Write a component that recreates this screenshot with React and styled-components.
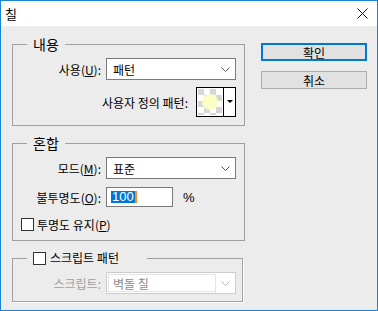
import React from "react";
import styled, { createGlobalStyle } from "styled-components";

const GlobalStyle = createGlobalStyle`
  html, body {
    margin: 0;
    padding: 0;
    background: #ffffff;
  }
  body {
    font-family: "Noto Sans CJK KR", "Noto Sans", sans-serif;
    font-size: 12px;
    color: #000;
  }
`;

const Window = styled.div`
  width: 378px;
  height: 311px;
  box-sizing: border-box;
  border: 1px solid #1883d7;
  background: #ececec;
  display: flex;
  flex-direction: column;
`;

const TitleBar = styled.div`
  height: 25px;
  flex-shrink: 0;
  background: #ffffff;
  display: flex;
  align-items: center;
  justify-content: space-between;
  padding: 0 9px 0 4px;
  font-size: 13px;
`;

const Body = styled.div`
  display: flex;
  align-items: flex-start;
  padding: 8px 0 0 11px;
`;

const LeftColumn = styled.div`
  display: flex;
  flex-direction: column;
  gap: 7px;
`;

const RightColumn = styled.div`
  display: flex;
  flex-direction: column;
  gap: 10px;
  margin-left: 16px;
  padding-top: 9px;
`;

const Group = styled.fieldset`
  margin: 0;
  padding: 0;
  min-width: 0;
  width: ${(p) => p.$width}px;
  box-sizing: border-box;
  border: 1px solid #a0a0a0;
  box-shadow: ${(p) => (p.$etched ? "1px 1px 0 #ffffff" : "none")};
`;

const Legend = styled.legend`
  margin-left: 14px;
  padding: 0 6px;
  box-sizing: border-box;
  width: ${(p) => (p.$width ? `${p.$width}px` : "auto")};
  font-size: ${(p) => p.$size || 14}px;
  line-height: 20px;
  height: 20px;
  display: flex;
  align-items: center;
`;

const GroupBody = styled.div`
  display: flex;
  flex-direction: column;
  padding: 4px 0 ${(p) => p.$bottom}px 0;
`;

const Row = styled.div`
  display: flex;
  align-items: center;
  margin-top: ${(p) => p.$top || 0}px;
  padding-left: ${(p) => p.$left || 0}px;
  padding-right: ${(p) => p.$right || 0}px;
  justify-content: ${(p) => (p.$end ? "flex-end" : "flex-start")};
`;

const Label = styled.span`
  width: 88px;
  flex-shrink: 0;
  margin-right: 5px;
  text-align: right;
  color: ${(p) => (p.$disabled ? "#a0a0a0" : "#000")};
  white-space: nowrap;
`;

const Select = styled.div`
  width: 130px;
  height: 22px;
  box-sizing: border-box;
  border: 1px solid #7a7a7a;
  background: #ffffff;
  display: flex;
  align-items: center;
  justify-content: space-between;
  padding: 0 5px 0 6px;
`;

const DisabledSelect = styled.div`
  width: 130px;
  height: 22px;
  box-sizing: border-box;
  border: 1px solid #cccccc;
  background: #ffffff;
  display: flex;
  align-items: stretch;
  padding: 1px;
`;

const DisabledField = styled.div`
  flex: 1;
  box-sizing: border-box;
  border: 1px solid #e3e3e3;
  padding-left: 4px;
  display: flex;
  align-items: center;
  color: #8a8a8a;
`;

const DisabledArrow = styled.div`
  width: 18px;
  display: flex;
  align-items: center;
  justify-content: center;
`;

const Input = styled.div`
  width: 67px;
  height: 20px;
  box-sizing: border-box;
  border: 1px solid #7a7a7a;
  background: #ffffff;
  display: flex;
  align-items: center;
  padding-left: 4px;
`;

const Selected = styled.span`
  background: #0078d7;
  color: #ffffff;
  line-height: 12px;
  height: 12px;
  padding: 0 1px;
  font-family: "Liberation Sans", "Noto Sans", sans-serif;
  font-size: 13px;
  border-right: 2px solid #ff8c1a;
`;

const Unit = styled.span`
  margin-left: 10px;
  font-family: "Liberation Sans", sans-serif;
  font-size: 13px;
`;

const PatternLabel = styled.span`
  margin-right: 8px;
`;

const CheckBox = styled.span`
  width: 13px;
  height: 13px;
  box-sizing: border-box;
  border: 1px solid #333333;
  background: #ffffff;
  flex-shrink: 0;
  margin-right: ${(p) => p.$gap || 3}px;
`;

const Button = styled.div`
  width: 106px;
  height: 18px;
  box-sizing: border-box;
  background: #e1e1e1;
  border: ${(p) => (p.$default ? "2px solid #0078d7" : "1px solid #adadad")};
  display: flex;
  align-items: center;
  justify-content: center;
  font-size: 12px;
`;

const Chevron = ({ color = "#555" }) => (
  <svg width="9" height="5" viewBox="0 0 9 5">
    <polyline points="0.5,0.5 4.5,4.5 8.5,0.5" fill="none" stroke={color} strokeWidth="1" />
  </svg>
);

const CloseIcon = () => (
  <svg width="11" height="11" viewBox="0 0 11 11">
    <path d="M0.5 0.5 L10.5 10.5 M10.5 0.5 L0.5 10.5" stroke="#111" strokeWidth="1" />
  </svg>
);

const PatternSwatch = () => (
  <svg width="40" height="30" viewBox="0 0 40 30">
    <defs>
      <pattern id="chk" width="12" height="12" patternUnits="userSpaceOnUse" x="2" y="2">
        <rect width="12" height="12" fill="#ffffff" />
        <rect width="6" height="6" fill="#d6d6d6" />
        <rect x="6" y="6" width="6" height="6" fill="#d6d6d6" />
      </pattern>
      <radialGradient id="dot">
        <stop offset="0.75" stopColor="#fbffc4" />
        <stop offset="1" stopColor="#fbffc4" stopOpacity="0" />
      </radialGradient>
    </defs>
    <rect x="0.5" y="0.5" width="39" height="29" fill="#ffffff" stroke="#000" />
    <rect x="2" y="2" width="24" height="26" fill="url(#chk)" />
    <circle cx="14" cy="15" r="9" fill="url(#dot)" />
    <line x1="27.5" y1="0" x2="27.5" y2="30" stroke="#000" />
    <polygon points="31,13 37,13 34,16" fill="#000" />
  </svg>
);

export default function App() {
  return (
    <>
      <GlobalStyle />
      <Window>
        <TitleBar>
          <span>칠</span>
          <CloseIcon />
        </TitleBar>
        <Body>
          <LeftColumn>
            <Group $width={233}>
              <Legend>내용</Legend>
              <GroupBody $bottom={8}>
                <Row>
                  <Label>
                    사용(<u>U</u>):
                  </Label>
                  <Select>
                    <span>패턴</span>
                    <Chevron />
                  </Select>
                </Row>
                <Row $top={7} $end $right={8}>
                  <PatternLabel>사용자 정의 패턴:</PatternLabel>
                  <PatternSwatch />
                </Row>
              </GroupBody>
            </Group>

            <Group $width={233}>
              <Legend>혼합</Legend>
              <GroupBody $bottom={7}>
                <Row>
                  <Label>
                    모드(<u>M</u>):
                  </Label>
                  <Select>
                    <span>표준</span>
                    <Chevron />
                  </Select>
                </Row>
                <Row $top={8}>
                  <Label>
                    불투명도(<u>O</u>):
                  </Label>
                  <Input>
                    <Selected>100</Selected>
                  </Input>
                  <Unit>%</Unit>
                </Row>
                <Row $top={9} $left={8}>
                  <CheckBox $gap={3} />
                  <span>
                    투명도 유지(<u>P</u>)
                  </span>
                </Row>
              </GroupBody>
            </Group>

            <Group $width={231} $etched>
              <Legend $width={120} $size={12}>
                <CheckBox $gap={4} />
                <span>스크립트 패턴</span>
              </Legend>
              <GroupBody $bottom={7}>
                <Row>
                  <Label $disabled>스크립트:</Label>
                  <DisabledSelect>
                    <DisabledField>벽돌 칠</DisabledField>
                    <DisabledArrow>
                      <Chevron color="#b5b5b5" />
                    </DisabledArrow>
                  </DisabledSelect>
                </Row>
              </GroupBody>
            </Group>
          </LeftColumn>

          <RightColumn>
            <Button $default>확인</Button>
            <Button>취소</Button>
          </RightColumn>
        </Body>
      </Window>
    </>
  );
}
